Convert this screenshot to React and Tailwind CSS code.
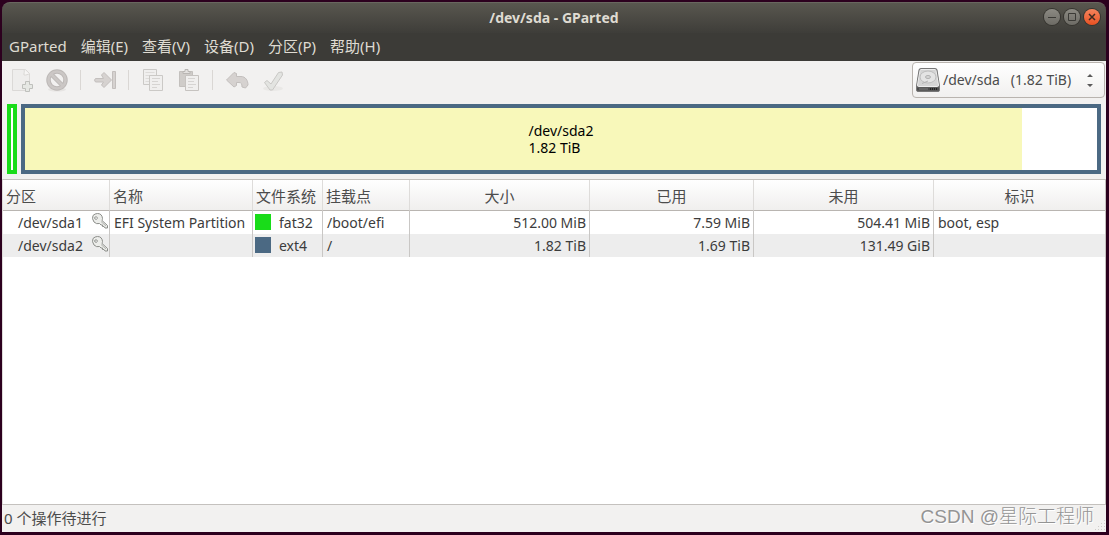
import { useState } from 'react'

const MENUS = ['GParted', '编辑(E)', '查看(V)', '设备(D)', '分区(P)', '帮助(H)']

const COLUMNS = [
  { label: '分区', width: 'w-[107px]', align: 'text-left' },
  { label: '名称', width: 'w-[143px]', align: 'text-left' },
  { label: '文件系统', width: 'w-[70px]', align: 'text-left' },
  { label: '挂载点', width: 'w-[87px]', align: 'text-left' },
  { label: '大小', width: 'w-[180px]', align: 'text-center' },
  { label: '已用', width: 'w-[164px]', align: 'text-center' },
  { label: '未用', width: 'w-[180px]', align: 'text-center' },
  { label: '标识', width: '', align: 'text-center' },
]

const PARTITIONS = [
  {
    path: '/dev/sda1',
    name: 'EFI System Partition',
    fs: 'fat32',
    swatch: 'bg-[#19dc19]',
    mount: '/boot/efi',
    size: '512.00 MiB',
    used: '7.59 MiB',
    unused: '504.41 MiB',
    flags: 'boot, esp',
  },
  {
    path: '/dev/sda2',
    name: '',
    fs: 'ext4',
    swatch: 'bg-[#4b6983]',
    mount: '/',
    size: '1.82 TiB',
    used: '1.69 TiB',
    unused: '131.49 GiB',
    flags: '',
  },
]

function NewIcon() {
  return (
    <svg width="24" height="24" viewBox="0 0 24 24" fill="none">
      <path d="M3.5 1.5h13l4 4v17h-17z" fill="#eeedec" stroke="#dbd9d7" />
      <path d="M15 1.5c1 2-.5 4.500 0 5.500 2 .5 4-1 5.500-1" fill="#f6f5f4" stroke="#dbd9d7" />
      <path d="M16.500 13.500h4v3h3v4h-3v3h-4v-3h-3v-4h3z" fill="#e6e8e4" stroke="#bfc0bc" />
    </svg>
  )
}

function DeleteIcon() {
  return (
    <svg width="24" height="24" viewBox="0 0 24 24" fill="none">
      <ellipse cx="12" cy="21.500" rx="9" ry="2" fill="#e6e4e2" />
      <circle cx="12" cy="12" r="8.500" stroke="#bdb9b7" strokeWidth="4.500" />
      <path d="M6 6l12 12" stroke="#bdb9b7" strokeWidth="4.500" />
      <circle cx="12" cy="12" r="8.500" stroke="#cbc7c5" strokeWidth="2.500" />
      <path d="M6 6l12 12" stroke="#cbc7c5" strokeWidth="2.500" />
    </svg>
  )
}

function ResizeIcon() {
  return (
    <svg width="24" height="24" viewBox="0 0 24 24" fill="#d6d2d0" stroke="#c3bfbd" strokeLinejoin="round">
      <path d="M2.500 10.500q-2 1.500 0 3.500h8l-2 3 2.500 2.500 7.500-7.500-7.500-7.500-2.500 2.500 2 3.500z" />
      <path d="M19.500 3.500h3v17h-3z" />
    </svg>
  )
}

function CopyIcon() {
  return (
    <svg width="24" height="24" viewBox="0 0 24 24" fill="#f0efee" stroke="#cbc9c6">
      <path d="M2.500 1.500h13v15h-13z" />
      <path d="M4.500 4.500h9M4.500 7.500h7M4.500 10.500h4M4.500 13.500h4" stroke="#dddbd9" />
      <path d="M8.500 7.500h13v15h-13z" />
      <path d="M11 10.500h8M11 13.500h6M11 16.500h8M11 19.500h5" stroke="#d6d4d2" />
    </svg>
  )
}

function PasteIcon() {
  return (
    <svg width="24" height="24" viewBox="0 0 24 24" fill="#cfccc9" stroke="#c3c0bd">
      <path d="M2.500 3.500h13v15h-13z" />
      <path d="M6 5.500v-2h2v-2h3v2h2v2z" fill="#e3e1df" stroke="#b9b6b3" />
      <path d="M8.500 7.500h13v15h-13z" fill="#f0efee" stroke="#c6c3c0" />
      <path d="M11 10.500h7M11 13.500h6M11 16.500h8M11 19.500h5" stroke="#d6d4d2" />
    </svg>
  )
}

function UndoIcon() {
  return (
    <svg width="24" height="24" viewBox="0 0 24 24" fill="#d6d2d0" stroke="#c3bfbd" strokeLinejoin="round">
      <path d="M1.500 12l7.500-7.500 2.500 1v3h4.500c4.500 0 7 4 7 8.500l-2.500 3-3.500-1c0-3-.5-4.500-3-4.500h-2.500v3l-2.500 1.500z" />
    </svg>
  )
}

function ApplyIcon() {
  return (
    <svg width="24" height="24" viewBox="0 0 24 24" stroke="#c9c8c5" strokeLinejoin="round">
      <ellipse cx="12" cy="20.500" rx="10" ry="2.500" fill="#e9e8e6" stroke="none" />
      <path d="M3.500 14.500l2.500-2 4 3.500 7.500-11.500 3.500-.5.500 3-10 15h-2.500z" fill="#e3e4e1" />
    </svg>
  )
}

function DiskIcon() {
  return (
    <svg width="24" height="24" viewBox="0 0 24 24" fill="none">
      <path d="M.5 18L3 2q.3-1.500 1.500-1.500h15q1.200 0 1.500 1.500l2.500 16v4q0 1.500-1.500 1.500H2Q.5 23.500.5 22z" fill="#6a6a6a" stroke="#777" />
      <path d="M1.500 17L4 2.500q.2-1 1-1h14q.8 0 1 1L22.500 17q0 1.500-1 1.500h-19q-1 0-1-1.500z" fill="#d4d4d4" stroke="#ededed" />
      <ellipse cx="12" cy="9" rx="8" ry="6" fill="#e4e4e4" stroke="#bdbdbd" />
      <ellipse cx="12" cy="9" rx="2.500" ry="1.500" fill="#d6d6d6" stroke="#b0b0b0" />
      <path d="M6 15.500l6-2.500" stroke="#b4b4b4" />
      <path d="M1 21h22" stroke="#4c4c4c" strokeWidth="3" />
      <path d="M3 21h9" stroke="#7c7c7c" />
      <path d="M14 21h7" stroke="#222" strokeDasharray="1 1" strokeWidth="2" />
    </svg>
  )
}

function KeyIcon() {
  return (
    <svg width="16" height="16" viewBox="0 0 16 16" fill="#ecedea" stroke="#8c8e8a" strokeLinejoin="round" className="shrink-0">
      <path
        fillRule="evenodd"
        d="M1 2.500Q3 .5 5.500.5q4.500 0 5 5-.1 1-.5 2l5.500 5v2.500h-2.500l-1-1.500h-1.500v-1.500h-1.500L7.500 10.500q-3 1-5.500-1.500Q-.5 5.500 1 2.500zM3.200 4a1.300 1.300 0 102 1.500A1.300 1.300 0 003.200 4z"
      />
      <path d="M9 8.500l5 4.500" stroke="#b4b6b2" />
    </svg>
  )
}

const TOOL_GROUPS = [
  [
    { label: '新建', Icon: NewIcon },
    { label: '删除', Icon: DeleteIcon },
  ],
  [{ label: '调整大小/移动', Icon: ResizeIcon }],
  [
    { label: '复制', Icon: CopyIcon },
    { label: '粘贴', Icon: PasteIcon },
  ],
  [
    { label: '撤消', Icon: UndoIcon },
    { label: '应用', Icon: ApplyIcon },
  ],
]

function TitleBar() {
  const round = 'flex size-4 items-center justify-center rounded-full ring-1 ring-[#35342f]'
  return (
    <header className="relative flex h-[31px] items-center justify-center rounded-t-lg border-t border-[#69675f] bg-linear-to-b from-[#59574f] to-[#3e3d39] pb-[2px]">
      <h1 className="text-[14px] font-bold text-[#dfdbd2]">/dev/sda - GParted</h1>
      <div className="absolute right-[6px] flex gap-1">
        <button aria-label="Minimize" className={`${round} bg-linear-to-b from-[#8c8a83] to-[#6d6b65]`}>
          <svg width="16" height="16" stroke="#3b3a36"><path d="M4 8.500h8" /></svg>
        </button>
        <button aria-label="Maximize" className={`${round} bg-linear-to-b from-[#8c8a83] to-[#6d6b65]`}>
          <svg width="16" height="16" fill="none" stroke="#3b3a36"><path d="M4.500 4.500h7v7h-7z" /></svg>
        </button>
        <button aria-label="Close" className={`${round} bg-linear-to-b from-[#f5845c] to-[#e8501f]`}>
          <svg width="16" height="16" stroke="#3b2a20" strokeWidth="1.500"><path d="M5 5l6 6M11 5l-6 6" /></svg>
        </button>
      </div>
    </header>
  )
}

function Toolbar({ device, onDevice }) {
  return (
    <div className="flex h-[38px] items-center justify-between px-px">
      <div className="flex">
        {TOOL_GROUPS.map((group, i) => (
          <div key={i} className="flex items-center">
            {i > 0 && <div className="mr-[6px] ml-[5px] h-5 w-px bg-[#dad7d4]" />}
            {group.map(({ label, Icon }) => (
              <button key={label} aria-label={label} disabled className="flex h-9 w-9 items-center justify-center">
                <Icon />
              </button>
            ))}
          </div>
        ))}
      </div>

      {/* Device picker */}
      <label className="relative flex h-9 items-center">
        <span className="pointer-events-none absolute left-1">
          <DiskIcon />
        </span>
        <select
          aria-label="设备"
          value={device}
          onChange={(e) => onDevice(e.target.value)}
          className="h-9 w-[193px] appearance-none rounded border border-[#b9b4af] bg-linear-to-b from-white to-[#f1f0ef] pb-[2px] pl-[30px] text-[14px] text-[#4c4c4c]"
        >
          <option value="/dev/sda">/dev/sda{'\u00a0\u00a0\u00a0'}(1.82 TiB)</option>
        </select>
        <svg width="8" height="14" viewBox="0 0 8 14" fill="#5a5a5a" className="pointer-events-none absolute right-[11px]">
          <path d="M1 4l3-3 3 3zM1 11h6l-3 3z" />
        </svg>
      </label>
    </div>
  )
}

function DiskMap({ selected, onSelect }) {
  return (
    <div className="flex h-20 gap-1 px-[5px] pt-[5px] pb-[5px]">
      <button
        aria-label="/dev/sda1"
        aria-pressed={selected === '/dev/sda1'}
        onClick={() => onSelect('/dev/sda1')}
        className="w-[10px] shrink-0 border-4 border-[#19dc19] bg-white"
      />
      <button
        aria-pressed={selected === '/dev/sda2'}
        onClick={() => onSelect('/dev/sda2')}
        className="grid min-w-0 flex-1 items-center border-4 border-[#4b6983] bg-white"
      >
        <span className="col-start-1 row-start-1 h-full w-[93%] bg-[#f8f8ba]" />
        <span className="col-start-1 row-start-1 justify-self-center text-left text-[14px] leading-[17px] text-black">
          /dev/sda2
          <br />
          1.82 TiB
        </span>
      </button>
    </div>
  )
}

function PartitionTable({ selected, onSelect }) {
  const cell = 'border-r border-[#c9c7c5] last:border-r-0'
  const text = `${cell} pl-1`
  const number = `${cell} pr-[3px] text-right`
  return (
    <div className="flex-1 border-x border-t border-b border-[#c4c1be] border-l-[#dedcda] bg-white">
      <table className="w-full table-fixed border-separate border-spacing-0 text-[14px] leading-5 whitespace-nowrap text-[#3c3c3c]">
        <thead>
          <tr className="h-[31px] bg-linear-to-b from-white to-[#efeeed] text-[15px] text-[#4c4c4c]">
            {COLUMNS.map((c) => (
              <th
                key={c.label}
                className={`${c.width} ${c.align} border-r border-b border-r-[#dedcda] border-b-[#b9b5b1] px-[3px] pt-[2px] font-normal last:border-r-0`}
              >
                {c.label}
              </th>
            ))}
          </tr>
        </thead>
        <tbody>
          {PARTITIONS.map((p) => (
            <tr
              key={p.path}
              aria-selected={selected === p.path}
              onClick={() => onSelect(p.path)}
              className="h-[23px] even:bg-[#ededed]"
            >
              <td className={cell}>
                <div className="flex items-start justify-between pr-px pl-[15px]">
                  {p.path}
                  <KeyIcon />
                </div>
              </td>
              <td className={text}>{p.name}</td>
              <td className={`${cell} pl-[2px]`}>
                <div className="flex items-start gap-2">
                  <span className={`mt-px size-4 ${p.swatch}`} />
                  {p.fs}
                </div>
              </td>
              <td className={text}>{p.mount}</td>
              <td className={number}>{p.size}</td>
              <td className={number}>{p.used}</td>
              <td className={number}>{p.unused}</td>
              <td className={text}>{p.flags}</td>
            </tr>
          ))}
        </tbody>
      </table>
    </div>
  )
}

export default function App() {
  const [device, setDevice] = useState('/dev/sda')
  const [selected, setSelected] = useState(null)

  return (
    <div className="flex min-h-screen flex-col bg-[#2c001e] pt-[2px] pr-[3px] pb-[3px] pl-[2px] font-['Noto_Sans','Noto_Sans_CJK_SC',sans-serif]">
      <TitleBar />

      <nav className="flex h-7 items-center gap-[14px] bg-[#3c3b37] px-[7px] pb-[2px] text-[15px] text-[#dfdbd2]">
        {MENUS.map((m) => (
          <button key={m}>{m}</button>
        ))}
      </nav>

      <main className="flex flex-1 flex-col bg-[#f2f1f0]">
        <Toolbar device={device} onDevice={setDevice} />
        <DiskMap selected={selected} onSelect={setSelected} />
        <PartitionTable selected={selected} onSelect={setSelected} />

        <footer className="relative flex h-[27px] items-center justify-between pr-3 pl-[2px] text-[15px] text-[#4c4c4c]">
          <p>0 个操作待进行</p>
          <p className="pb-1 font-['Liberation_Sans','Noto_Sans_CJK_SC',sans-serif] text-[19px] leading-6 font-light text-[#949494] text-shadow-[1px_1px_0_#ffffff]">
            CSDN @星际工程师
          </p>
          {/* Resize grip */}
          <svg width="11" height="11" viewBox="0 0 11 11" stroke="#cfccc9" strokeDasharray="1 2" className="absolute right-0 bottom-px">
            <path d="M9 .5h1M6 3.500h4M3 6.500h7M0 9.500h10" />
          </svg>
        </footer>
      </main>
    </div>
  )
}
